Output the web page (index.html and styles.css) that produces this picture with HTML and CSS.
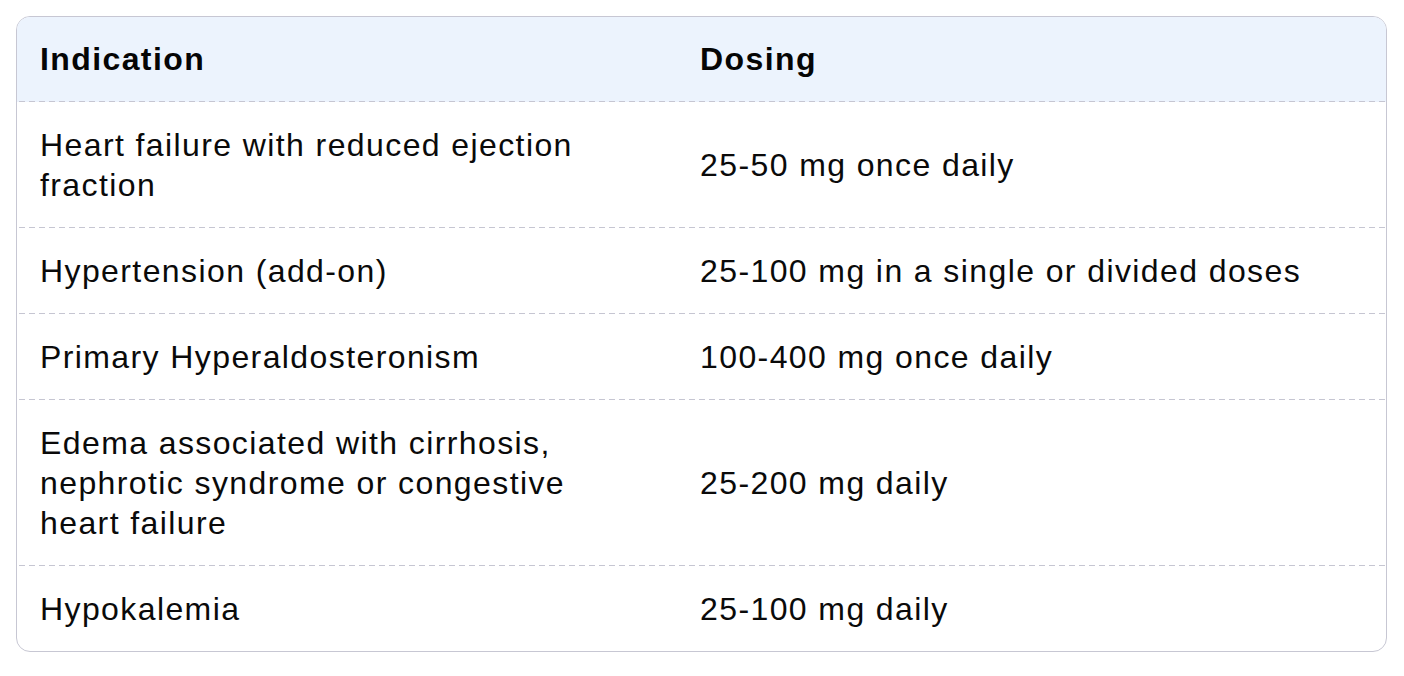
FILE: index.html
```html
<!DOCTYPE html>
<html lang="en">
<head>
<meta charset="utf-8">
<title>Dosing</title>
<link rel="stylesheet" href="styles.css">
</head>
<body>
<div class="table">
  <div class="row head">
    <div class="cell">Indication</div>
    <div class="cell">Dosing</div>
  </div>
  <div class="row">
    <div class="cell">Heart failure with reduced ejection fraction</div>
    <div class="cell">25-50 mg once daily</div>
  </div>
  <div class="row">
    <div class="cell">Hypertension (add-on)</div>
    <div class="cell">25-100 mg in a single or divided doses</div>
  </div>
  <div class="row">
    <div class="cell">Primary Hyperaldosteronism</div>
    <div class="cell">100-400 mg once daily</div>
  </div>
  <div class="row">
    <div class="cell">Edema associated with cirrhosis, nephrotic syndrome or congestive heart failure</div>
    <div class="cell">25-200 mg daily</div>
  </div>
  <div class="row last">
    <div class="cell">Hypokalemia</div>
    <div class="cell">25-100 mg daily</div>
  </div>
</div>
</body>
</html>
```
FILE: styles.css
```css
html, body {
  margin: 0;
  padding: 0;
  background: #ffffff;
}
body {
  padding: 16px 17px 16px 16px;
  font-family: "Liberation Sans", Arial, Helvetica, sans-serif;
  font-size: 32px;
  letter-spacing: 1.4px;
  line-height: 40px;
  color: #0a0a0a;
}
.table {
  border: 1px solid #c7c7d3;
  border-radius: 14px;
  overflow: hidden;
  background: #ffffff;
}
.row {
  display: grid;
  grid-template-columns: 660px 1fr;
  align-items: center;
  padding-bottom: 1px;
  background-image: linear-gradient(to right, #c6c6d2 0 6px, transparent 6px 10px);
  background-size: 10px 1px;
  background-repeat: repeat-x;
  background-position: 2px bottom;
}
.row.last {
  background-image: none;
  padding-bottom: 0;
}
.row.head {
  background-color: #ecf3fd;
  font-weight: bold;
  color: #050505;
}
.cell {
  padding: 22.5px 23px;
}
.row.head .cell {
  padding: 22px 23px;
}
```
